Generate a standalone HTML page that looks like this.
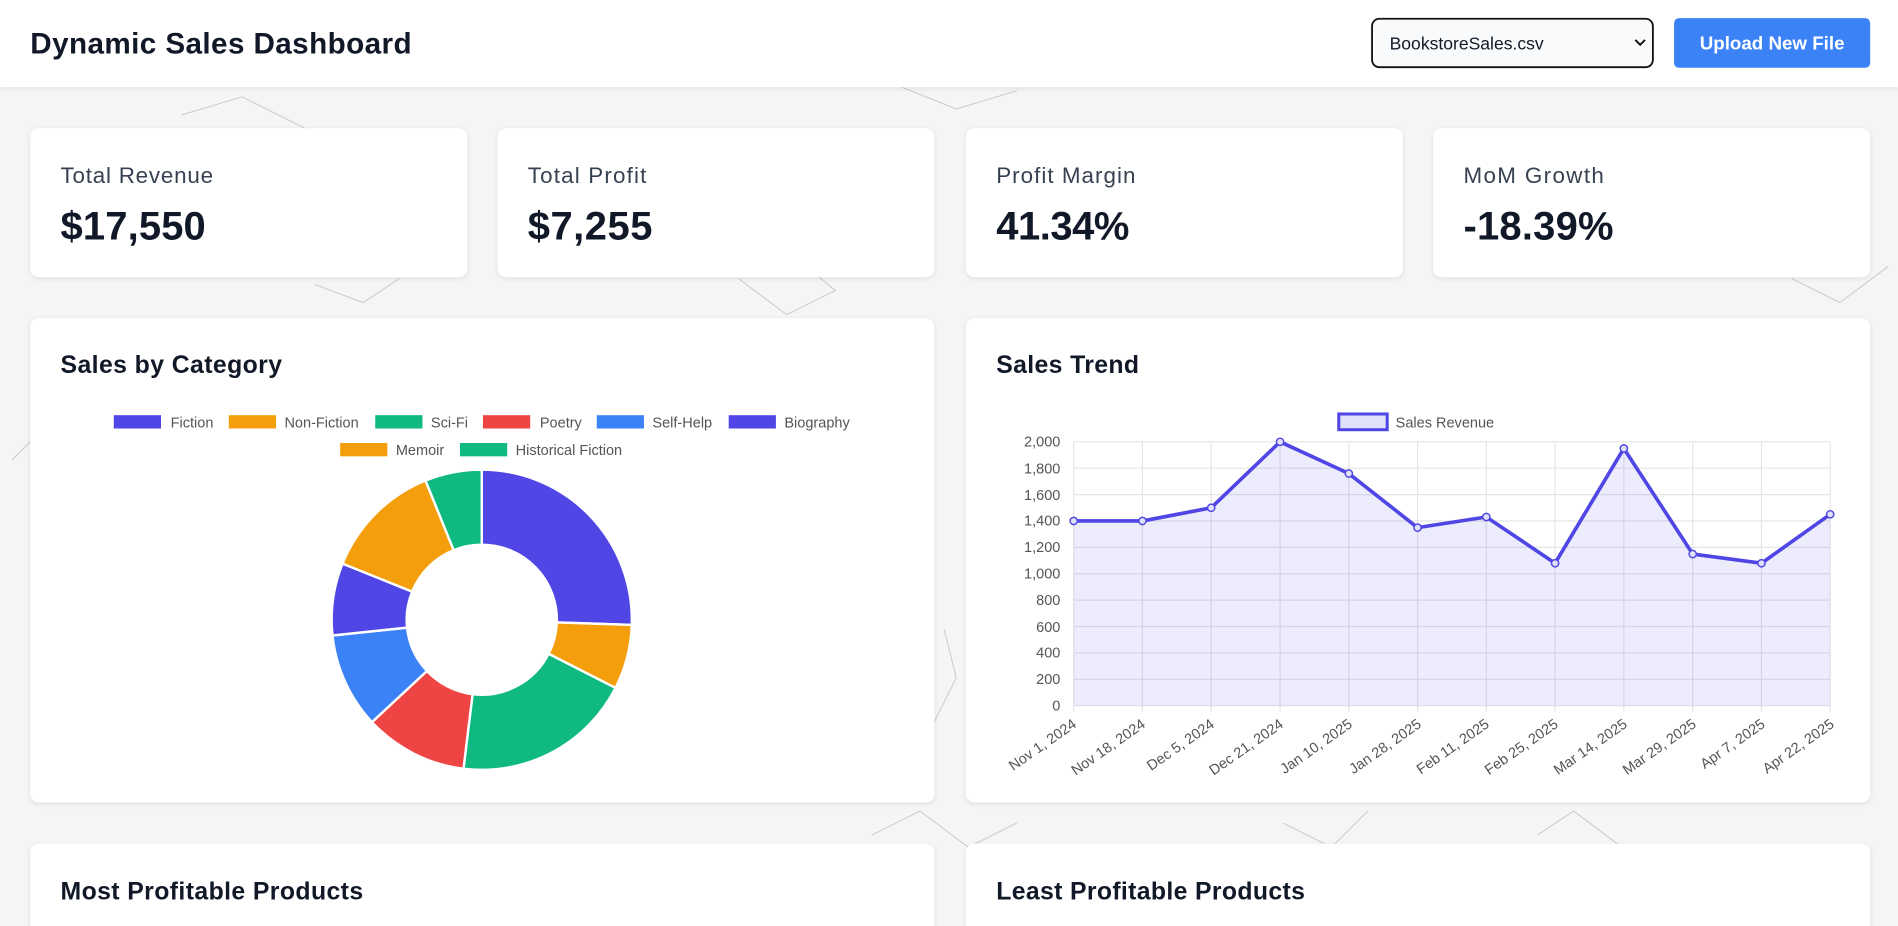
<!DOCTYPE html>
<html><head><meta charset="utf-8">
<style>
html,body{margin:0;padding:0;width:1898px;height:926px;overflow:hidden;background:#f4f5f7}
svg{display:block;font-family:"Liberation Sans",sans-serif}
</style></head><body>
<svg width="1898" height="926" viewBox="0 0 1568 765" xmlns="http://www.w3.org/2000/svg">
<defs>
<filter id="sh" x="-5%" y="-5%" width="110%" height="115%"><feDropShadow dx="0" dy="1" stdDeviation="2" flood-color="#000" flood-opacity="0.10"/></filter>
</defs>
<rect width="1568" height="765" fill="#f4f5f7"/>
<g stroke="#aaa" stroke-width="0.8" fill="none" opacity="0.6">
<polyline points="150,95 200,80 260,110 240,140"/>
<polyline points="610,230 650,260 690,240 660,215"/>
<polyline points="260,235 300,250 330,230"/>
<polyline points="720,690 760,670 800,700 840,680"/>
<polyline points="1270,690 1300,670 1340,700"/>
<polyline points="1480,230 1520,250 1560,220"/>
<polyline points="1060,680 1100,700 1130,670"/>
<polyline points="740,70 790,90 840,75"/>
<polyline points="10,380 40,350 30,320"/>
<polyline points="780,520 790,560 770,600"/>
</g>
<rect x="0" y="0" width="1568" height="72" fill="#fff" filter="url(#sh)"/>
<text x="25" y="44" font-size="24.5" font-weight="bold" fill="#111827" textLength="315">Dynamic Sales Dashboard</text>
<rect x="1133.5" y="15.5" width="232" height="40" rx="6" fill="#f9fafb" stroke="#111" stroke-width="1.5"/>
<text x="1148" y="41" font-size="14.5" fill="#111827">BookstoreSales.csv</text>
<path d="M1351 33 l4 4 4-4" stroke="#111" stroke-width="1.6" fill="none"/>
<rect x="1383" y="15" width="162" height="41" rx="4" fill="#3b82f6"/>
<text x="1464" y="41" font-size="15.5" font-weight="bold" fill="#fff" text-anchor="middle">Upload New File</text>

<g filter="url(#sh)" fill="#fff">
<rect x="25" y="106" width="361" height="123" rx="7"/>
<rect x="411" y="106" width="361" height="123" rx="7"/>
<rect x="798" y="106" width="361" height="123" rx="7"/>
<rect x="1184" y="106" width="361" height="123" rx="7"/>
<rect x="25" y="263" width="747" height="400" rx="7"/>
<rect x="798" y="263" width="747" height="400" rx="7"/>
<rect x="25" y="697" width="747" height="100" rx="7"/>
<rect x="798" y="697" width="747" height="100" rx="7"/>
</g>
<g font-size="18.5" fill="#374151">
<text x="50" y="151" textLength="126">Total Revenue</text><text x="436" y="151" textLength="98">Total Profit</text>
<text x="823" y="151" textLength="115">Profit Margin</text><text x="1209" y="151" textLength="116">MoM Growth</text>
</g>
<g font-size="33" font-weight="bold" fill="#111827">
<text x="50" y="198" textLength="120">$17,550</text><text x="436" y="198" textLength="103">$7,255</text>
<text x="823" y="198" textLength="110">41.34%</text><text x="1209" y="198" textLength="124">-18.39%</text>
</g>
<g font-size="20.5" font-weight="bold" fill="#111827">
<text x="50" y="308" textLength="183">Sales by Category</text><text x="823" y="308" textLength="118">Sales Trend</text>
<text x="50" y="743" textLength="250">Most Profitable Products</text><text x="823" y="743" textLength="255">Least Profitable Products</text>
</g>

<g font-size="12" fill="#555">
<rect x="94" y="343" width="39" height="11" fill="#4f46e5"/><text x="141" y="353">Fiction</text>
<rect x="189" y="343" width="39" height="11" fill="#f59e0b"/><text x="235" y="353">Non-Fiction</text>
<rect x="310" y="343" width="39" height="11" fill="#10b981"/><text x="356" y="353">Sci-Fi</text>
<rect x="399" y="343" width="39" height="11" fill="#ef4444"/><text x="446" y="353">Poetry</text>
<rect x="493" y="343" width="39" height="11" fill="#3b82f6"/><text x="539" y="353">Self-Help</text>
<rect x="602" y="343" width="39" height="11" fill="#4f46e5"/><text x="648" y="353">Biography</text>
<rect x="281" y="366" width="39" height="11" fill="#f59e0b"/><text x="327" y="376">Memoir</text>
<rect x="380" y="366" width="39" height="11" fill="#10b981"/><text x="426" y="376">Historical Fiction</text>
</g>
<g stroke="#fff" stroke-width="2">
<path d="M398 388 A124 124 0 0 1 521.9 516.3 L460 514.2 A62 62 0 0 0 398 450Z" fill="#4f46e5"/>
<path d="M521.9 516.3 A124 124 0 0 1 508.5 568.3 L453.2 540.1 A62 62 0 0 0 460 514.2Z" fill="#f59e0b"/>
<path d="M508.5 568.3 A124 124 0 0 1 382.9 635.1 L390.4 573.5 A62 62 0 0 0 453.2 540.1Z" fill="#10b981"/>
<path d="M382.9 635.1 A124 124 0 0 1 307.3 596.6 L352.7 554.3 A62 62 0 0 0 390.4 573.5Z" fill="#ef4444"/>
<path d="M307.3 596.6 A124 124 0 0 1 274.7 525 L336.3 518.5 A62 62 0 0 0 352.7 554.3Z" fill="#3b82f6"/>
<path d="M274.7 525 A124 124 0 0 1 283 465.6 L340.5 488.8 A62 62 0 0 0 336.3 518.5Z" fill="#4f46e5"/>
<path d="M283 465.6 A124 124 0 0 1 351.5 397 L374.8 454.5 A62 62 0 0 0 340.5 488.8Z" fill="#f59e0b"/>
<path d="M351.5 397 A124 124 0 0 1 398 388 L398 450 A62 62 0 0 0 374.8 454.5Z" fill="#10b981"/>
</g>

<rect x="1106" y="342" width="40" height="13" fill="#e0e0f8" stroke="#4f46e5" stroke-width="2.5"/>
<text x="1153" y="353" font-size="12" fill="#555">Sales Revenue</text>
<g stroke="#e5e5e5" stroke-width="1">
<path d="M887 583H1512M887 561.2H1512M887 539.4H1512M887 517.6H1512M887 495.8H1512M887 474H1512M887 452.2H1512M887 430.4H1512M887 408.6H1512M887 386.8H1512M887 365H1512"/>
<path d="M887 365V588M943.8 365V588M1000.6 365V588M1057.5 365V588M1114.3 365V588M1171.1 365V588M1227.9 365V588M1284.7 365V588M1341.5 365V588M1398.4 365V588M1455.2 365V588M1512 365V588"/>
</g>
<g font-size="12" fill="#555" text-anchor="end">
<text x="876" y="587">0</text><text x="876" y="565">200</text><text x="876" y="543">400</text><text x="876" y="522">600</text><text x="876" y="500">800</text><text x="876" y="478">1,000</text><text x="876" y="456">1,200</text><text x="876" y="434">1,400</text><text x="876" y="413">1,600</text><text x="876" y="391">1,800</text><text x="876" y="369">2,000</text>
</g>
<path d="M887 430.4 L943.8 430.4 L1000.6 419.5 L1057.5 365 L1114.3 391.2 L1171.1 435.9 L1227.9 427.1 L1284.7 465.3 L1341.5 370.5 L1398.4 457.7 L1455.2 465.3 L1512 424.9 L1512 583 L887 583Z" fill="#4f46e5" fill-opacity="0.1"/>
<polyline points="887,430.4 943.8,430.4 1000.6,419.5 1057.5,365 1114.3,391.2 1171.1,435.9 1227.9,427.1 1284.7,465.3 1341.5,370.5 1398.4,457.7 1455.2,465.3 1512,424.9" fill="none" stroke="#4f46e5" stroke-width="3" stroke-linejoin="round"/>
<g fill="#e0e0f8" stroke="#4f46e5" stroke-width="1.2">
<circle cx="887" cy="430.4" r="3"/><circle cx="943.8" cy="430.4" r="3"/><circle cx="1000.6" cy="419.5" r="3"/><circle cx="1057.5" cy="365" r="3"/><circle cx="1114.3" cy="391.2" r="3"/><circle cx="1171.1" cy="435.9" r="3"/><circle cx="1227.9" cy="427.1" r="3"/><circle cx="1284.7" cy="465.3" r="3"/><circle cx="1341.5" cy="370.5" r="3"/><circle cx="1398.4" cy="457.7" r="3"/><circle cx="1455.2" cy="465.3" r="3"/><circle cx="1512" cy="424.9" r="3"/>
</g>
<g font-size="12" fill="#555" text-anchor="end">
<text transform="translate(890,600) rotate(-35)">Nov 1, 2024</text>
<text transform="translate(947,600) rotate(-35)">Nov 18, 2024</text>
<text transform="translate(1004,600) rotate(-35)">Dec 5, 2024</text>
<text transform="translate(1061,600) rotate(-35)">Dec 21, 2024</text>
<text transform="translate(1118,600) rotate(-35)">Jan 10, 2025</text>
<text transform="translate(1175,600) rotate(-35)">Jan 28, 2025</text>
<text transform="translate(1231,600) rotate(-35)">Feb 11, 2025</text>
<text transform="translate(1288,600) rotate(-35)">Feb 25, 2025</text>
<text transform="translate(1345,600) rotate(-35)">Mar 14, 2025</text>
<text transform="translate(1402,600) rotate(-35)">Mar 29, 2025</text>
<text transform="translate(1459,600) rotate(-35)">Apr 7, 2025</text>
<text transform="translate(1516,600) rotate(-35)">Apr 22, 2025</text>
</g>
</svg>
</body></html>
